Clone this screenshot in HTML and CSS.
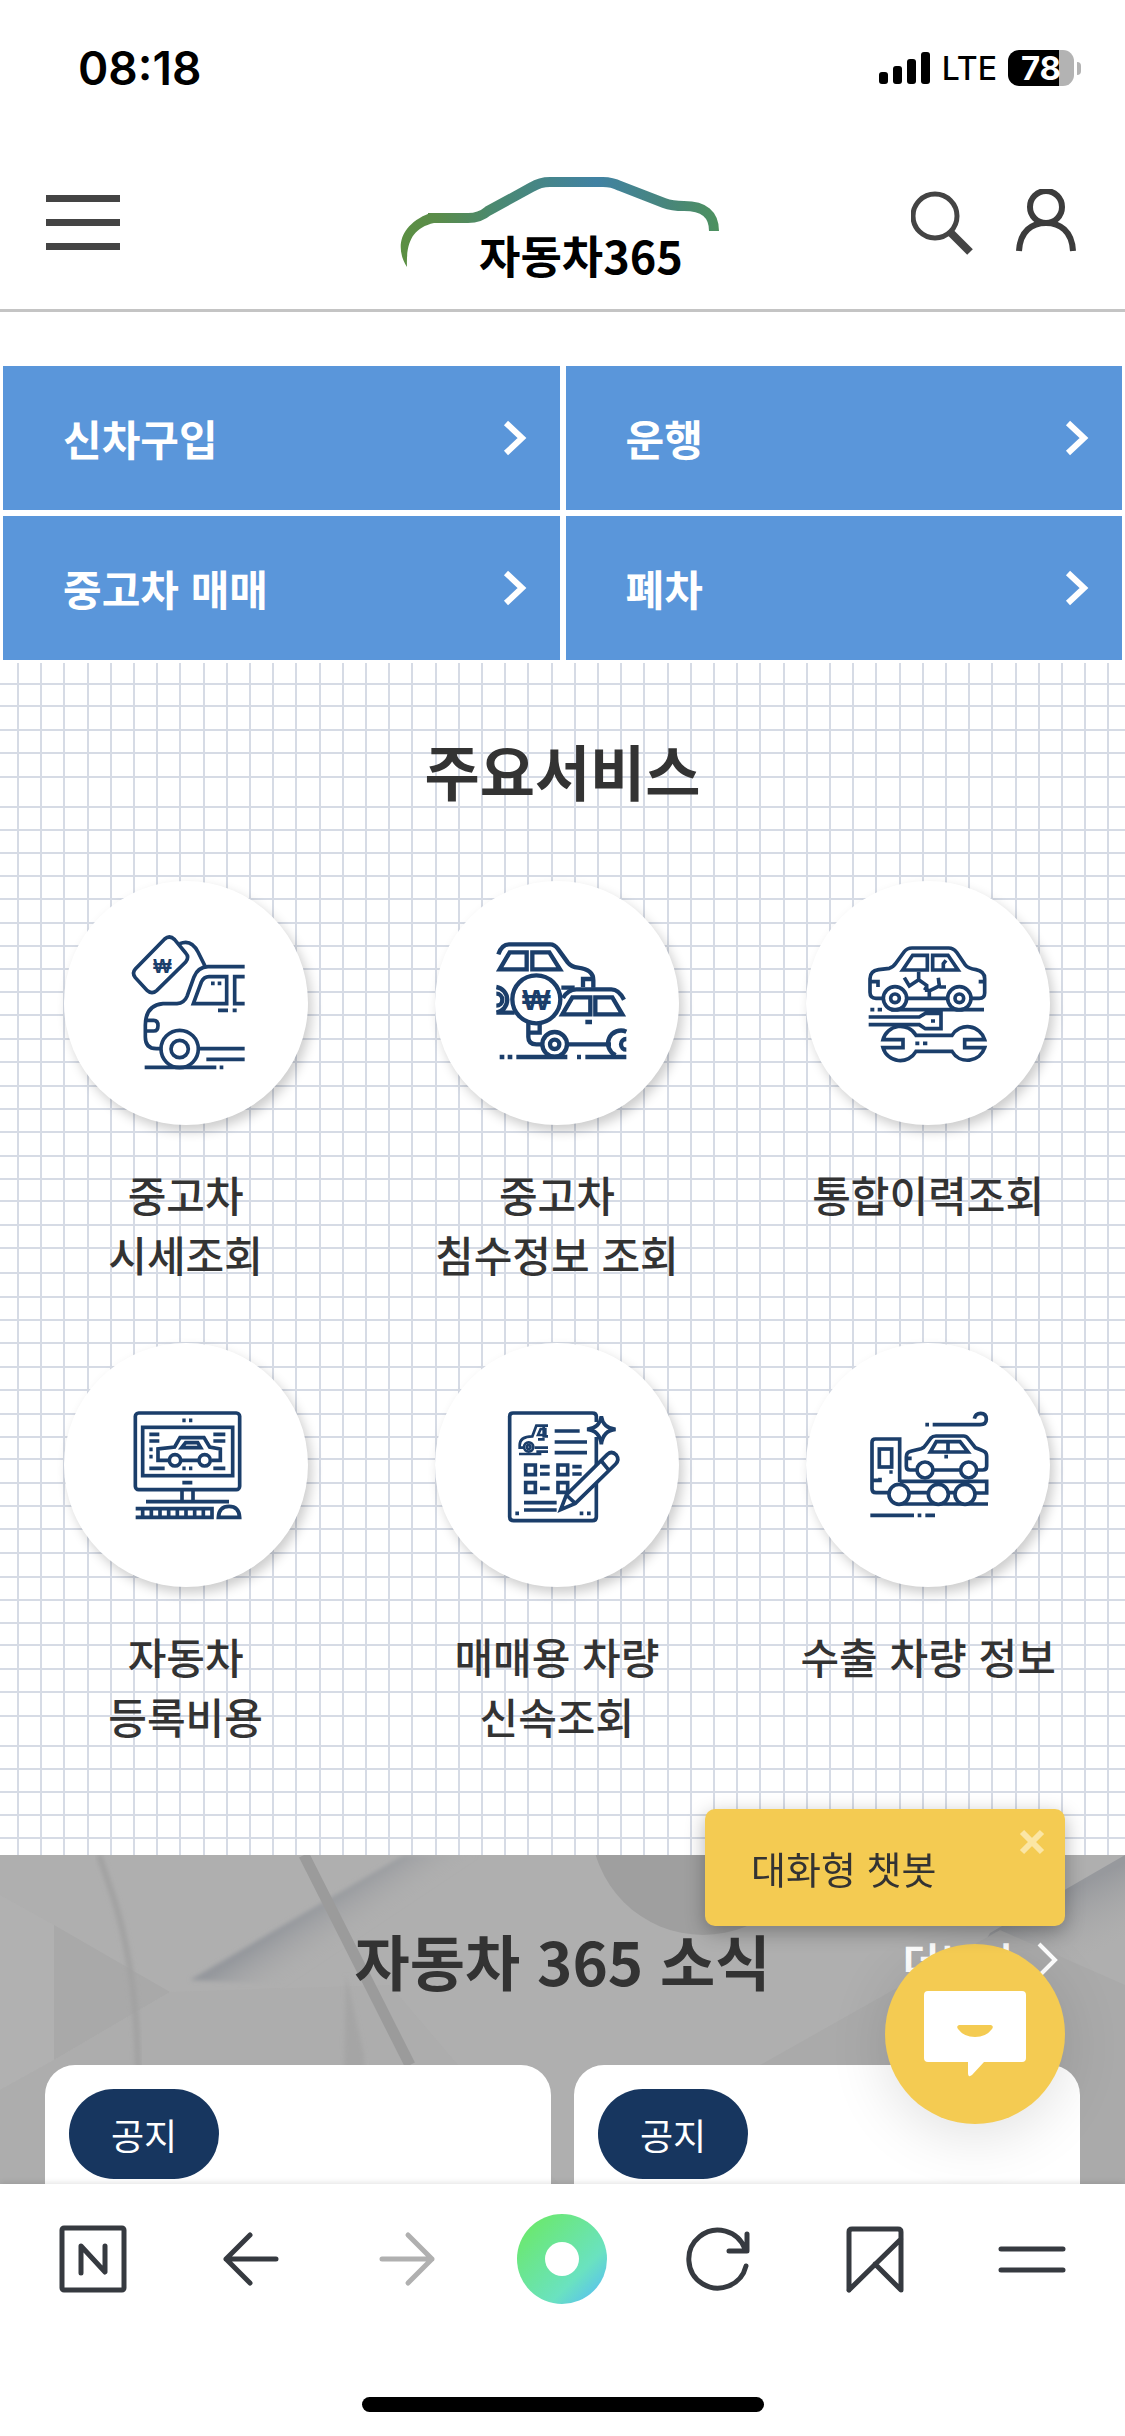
FILE: index.html
```html
<!DOCTYPE html>
<html lang="ko">
<head>
    <meta charset="UTF-8">
    <meta name="viewport" content="width=device-width, initial-scale=1">
    <title>자동차365</title>
    <link rel="stylesheet" href="styles.css">
</head>
<body>
    <!-- Status bar -->
    <div class="status-bar">
        <span class="status-time">08:18</span>
        <div class="status-right">
            <svg class="status-signal" width="52" height="36" viewBox="0 0 52 36">
                <rect x="0" y="22" width="9" height="12" rx="3"/>
                <rect x="14" y="16" width="9" height="18" rx="3"/>
                <rect x="28" y="9" width="9" height="25" rx="3"/>
                <rect x="42" y="2" width="9" height="32" rx="3"/>
            </svg>
            <span class="status-network">LTE</span>
            <div class="battery"><span class="battery-level">78</span></div>
        </div>
    </div>

    <!-- Header -->
    <header class="header">
        <button class="icon-button" aria-label="메뉴">
            <svg width="74" height="56" viewBox="0 0 74 56" fill="#444"><path d="M0 0h74v7H0zM0 24h74v7H0zM0 48h74v7H0z"/></svg>
        </button>
        <a class="logo" href="#">
            <svg width="326" height="132" viewBox="399 157 326 132">
                <defs>
                    <linearGradient id="logo-line" gradientUnits="userSpaceOnUse" x1="399" y1="0" x2="718" y2="0">
                        <stop offset="0" stop-color="#5b8f42"/>
                        <stop offset="0.12" stop-color="#5a8c4a"/>
                        <stop offset="0.3" stop-color="#4a8970"/>
                        <stop offset="0.62" stop-color="#4182a3"/>
                        <stop offset="0.85" stop-color="#488679"/>
                        <stop offset="1" stop-color="#4d915f"/>
                    </linearGradient>
                </defs>
                <path d="M407 267C396 250 397 226 430 213L434 223C412 228 406 243 407 267Z" fill="url(#logo-line)"/>
                <path d="M428 218H468Q480 218 488 211L532 187Q540 182 550 182H603Q612 182 620 186L664 203Q672 206 684 206Q714 206 714 231" fill="none" stroke="url(#logo-line)" stroke-width="10"/>
                <text class="logo-text" x="479" y="274">자동차365</text>
            </svg>
        </a>
        <div class="header-actions">
            <button class="icon-button" aria-label="검색">
                <svg width="62" height="64" viewBox="0 0 62 64" fill="none" stroke="#444" stroke-width="5"><circle cx="24" cy="25" r="22"/><path d="M40 42l19 19" stroke-width="8"/></svg>
            </button>
            <button class="icon-button" aria-label="마이페이지">
                <svg width="62" height="68" viewBox="0 0 62 68" fill="none" stroke="#3c3c3c" stroke-width="6"><circle cx="31" cy="18" r="16"/><path d="M4 62C5 42 17 34 31 34S57 42 58 62"/></svg>
            </button>
        </div>
    </header>

    <main class="main">
        <!-- Quick menu -->
        <nav class="quick-menu">
            <a class="quick-link" href="#">신차구입 <svg width="24" height="36" viewBox="0 0 24 36"><path d="M3 3l16 15L3 33"/></svg></a>
            <a class="quick-link" href="#">운행 <svg width="24" height="36" viewBox="0 0 24 36"><path d="M3 3l16 15L3 33"/></svg></a>
            <a class="quick-link" href="#">중고차 매매 <svg width="24" height="36" viewBox="0 0 24 36"><path d="M3 3l16 15L3 33"/></svg></a>
            <a class="quick-link" href="#">폐차 <svg width="24" height="36" viewBox="0 0 24 36"><path d="M3 3l16 15L3 33"/></svg></a>
        </nav>

        <!-- Main services -->
        <section class="services">
            <h2 class="section-title">주요서비스</h2>
            <div class="service-list">
                <a class="service" href="#">
                    <svg class="service-icon" viewBox="43 32 732 732">
                        <path d="M345 206L257 296Q246 308 257 322L293 361Q307 373 321 361L408 275Q420 261 408 248L375 208Q360 193 345 206Z"/>
                        <path d="M390 220Q425 205 445 245L466 287"/>
                        <path d="M585 289H475Q445 290 433 320L412 378Q404 398 382 400H340Q287 405 287 465V500Q287 535 320 535H333"/>
                        <path d="M287 450H312Q325 450 325 466Q325 482 312 482H287"/>
                        <path d="M585 319H555V400H585M531 319V400H431L455 335Q463 319 478 319Z"/>
                        <circle cx="390" cy="536" r="56"/>
                        <circle cx="390" cy="536" r="26"/>
                        <path d="M448 535H585M470 567H585M285 591H500M510 591h11M484 339h11M504 339h11M505 420h30M549 420h12"/>
                        <text x="338" y="308" font-size="58">₩</text>
                    </svg>
                    <span class="service-name">중고차<br>시세조회</span>
                </a>
                <a class="service" href="#">
                    <svg class="service-icon bold" viewBox="46 32 732 732">
                        <path d="M236 252Q246 222 268 222H392Q405 222 415 236L444 276Q455 290 475 292Q521 297 521 330V352M490 350V326H521"/>
                        <path d="M240 297L270 246H321V297ZM338 246H389L421 297H338Z"/>
                        <path d="M230 350A39 39 0 0 1 230 427M230 370A18 18 0 0 1 230 406M230 427H285M425 352H465"/>
                        <path d="M430 383Q445 357 470 357H575Q597 357 613 388"/>
                        <path d="M428 432L458 381H512V432ZM527 381H578L608 432H527Z"/>
                        <path d="M326 455V500Q326 522 350 522H368M360 455V487H330M446 522H574"/>
                        <circle cx="350" cy="387" r="72" fill="#fff"/>
                        <circle cx="405" cy="522" r="37"/>
                        <circle cx="405" cy="522" r="14"/>
                        <path d="M620 484A38 38 0 0 0 588 555M620 506A16 16 0 0 0 620 538"/>
                        <path d="M240 560h14M264 560h14M290 560h153M472 560h12M497 560h123M497 455h20"/>
                        <text x="350" y="420" font-size="90">₩</text>
                    </svg>
                    <span class="service-name">중고차<br>침수정보 조회</span>
                </a>
                <a class="service" href="#">
                    <svg class="service-icon" viewBox="50 32 732 732">
                        <path d="M283 384H260Q242 384 242 366V325Q242 302 268 298L300 294Q312 290 320 278L344 245Q353 233 368 233H478Q492 233 502 246L528 284Q535 294 560 298Q586 303 586 325V368Q586 384 570 384H548M355 384H472"/>
                        <path d="M340 299L370 255H414V299ZM430 255H476L506 299H430Z"/>
                        <path d="M388 304V328L360 347L345 322M388 328L412 345V365M404 352L420 362L450 347L447 322M450 350H470M420 362V388M462 299V280L470 270M245 334H266V350M568 334H584"/>
                        <circle cx="317" cy="384" r="35"/>
                        <circle cx="317" cy="384" r="13"/>
                        <circle cx="510" cy="384" r="35"/>
                        <circle cx="510" cy="384" r="13"/>
                        <path d="M243 418h12M265 418h13M305 418H584M238 440H390L408 429H455V475H408L390 463H238M425 452h12"/>
                        <path d="M281 508A54 54 0 0 1 380 495H488A54 54 0 0 1 586 508H526V532H586A54 54 0 0 1 488 543H380A54 54 0 0 1 281 532H341V508ZM378 519h12M401 519h13"/>
                    </svg>
                    <span class="service-name">통합이력조회</span>
                </a>
                <a class="service" href="#">
                    <svg class="service-icon" viewBox="43 38 732 732">
                        <rect x="257" y="248" width="313" height="230" rx="10"/>
                        <rect x="279" y="291" width="270" height="145"/>
                        <path d="M397 482V510M430 482V510M289 514H538M258 535H487V561H258M279 535V561M305 535V561M331 535V561M357 535V561M383 535V561M409 535V561M435 535V561M461 535V561"/>
                        <path d="M506 561Q508 528 538 528T570 561Z"/>
                        <path d="M398 270h10M418 270h10M398 457h30M299 312h30M299 332h30M491 312h36M491 332h36M299 357h10M299 379h10M299 414h46M398 414h10M418 414h10M491 414h36"/>
                        <path d="M357 390H325V356L375 350L391 322H463L480 350L512 356V390H486M397 390H446M396 352L408 337H444L453 352Z"/>
                        <circle cx="376" cy="390" r="17"/>
                        <circle cx="465" cy="390" r="17"/>
                    </svg>
                    <span class="service-name">자동차<br>등록비용</span>
                </a>
                <a class="service" href="#">
                    <svg class="service-icon" viewBox="46 38 732 732">
                        <path d="M530 275V258Q530 248 518 248H280Q270 248 270 258V560Q270 571 282 571H518Q530 571 530 560V455M530 320V405"/>
                        <path d="M545 258Q550 294 588 297Q550 300 545 342Q540 300 502 297Q540 294 545 258Z"/>
                        <path d="M405 302h75M405 335h97M405 367h97M361 409h29M361 431h29M458 409h28M458 431h28M361 474h29M313 517h98M313 539h98M287 549h11M480 549h11M502 549h11"/>
                        <path d="M318 404h29v29h-29zM415 404h29v29h-29zM318 457h29v29h-29zM415 457h29v29h-29z"/>
                        <path d="M423 538L440 494L563 372Q577 360 590 374Q600 388 588 401L467 519Z" fill="#fff"/>
                        <path d="M440 494L467 519M545 392L566 418"/>
                        <path d="M385 286H350L338 318Q300 318 300 345V352H310M345 352H385M385 364H350M298 371H365M355 327h20M355 314l8-18h14v18zM372 290V318H385" stroke-width="8"/>
                        <circle cx="327" cy="350" r="14" stroke-width="8"/>
                        <circle cx="327" cy="350" r="4"/>
                    </svg>
                    <span class="service-name">매매용 차량<br>신속조회</span>
                </a>
                <a class="service" href="#">
                    <svg class="service-icon" viewBox="50 38 732 732">
                        <path d="M297 487H260Q248 487 248 476V336Q248 326 258 326H331V455M360 487H416M331 453H592V488H558M478 487H497M252 450H272V442M300 425h10"/>
                        <rect x="270" y="356" width="37" height="54"/>
                        <path d="M329 521H596M243 555h131M385 555h11M408 555h29M408 283h11M430 283H572Q591 283 591 267Q591 249 574 249Q558 249 555 265"/>
                        <path d="M381 419H362Q351 419 351 408V380Q351 366 364 363L395 355Q405 352 410 343L425 323Q430 317 440 317H523Q531 317 536 324L558 352Q580 360 586 364Q592 368 592 378V408Q592 419 580 419H565M434 419H512"/>
                        <path d="M423 365L441 334H512L536 365ZM476 334V366M465 379h11M355 384h12"/>
                        <g fill="#fff">
                            <circle cx="407" cy="419" r="24"/>
                            <circle cx="538" cy="419" r="24"/>
                            <circle cx="329" cy="492" r="30"/>
                            <circle cx="447" cy="492" r="30"/>
                            <circle cx="527" cy="492" r="30"/>
                        </g>
                    </svg>
                    <span class="service-name">수출 차량 정보</span>
                </a>
            </div>
        </section>

        <!-- News -->
        <section class="news">
            <svg class="news-background" viewBox="0 0 1125 330" preserveAspectRatio="xMidYMin slice">
                <defs>
                    <linearGradient id="fold" gradientUnits="userSpaceOnUse" x1="290" y1="66" x2="318" y2="108">
                        <stop offset="0" stop-color="#94979c"/>
                        <stop offset="1" stop-color="#aeaeae" stop-opacity="0"/>
                    </linearGradient>
                    <linearGradient id="fold-right" gradientUnits="userSpaceOnUse" x1="1060" y1="40" x2="1090" y2="100">
                        <stop offset="0" stop-color="#97999d"/>
                        <stop offset="1" stop-color="#aaa" stop-opacity="0"/>
                    </linearGradient>
                    <filter id="soft"><feGaussianBlur stdDeviation="2"/></filter>
                </defs>
                <path d="M0 40L54 70V205L0 235Z" fill="#b1b1b1"/>
                <path d="M54 70L170 137L54 205Z" fill="#a9a9a9"/>
                <path d="M170 137L54 205L0 235V330H560L390 130Z" fill="#adadad"/>
                <path d="M190 125L404 0H480L290 130Z" fill="url(#fold)" filter="url(#soft)"/>
                <path d="M1125 0L990 78L960 130L1125 130Z" fill="url(#fold-right)"/>
                <path d="M760 210L1000 75L1125 130V330H620Z" fill="#aaa"/>
                <path d="M346 120L342 330H368L364 200Z" fill="#a5a5a5" filter="url(#soft)"/>
                <circle cx="703" cy="-32" r="112" fill="#9f9f9f"/>
                <path d="M99 0L112 38Q136 110 138 210V330" fill="none" stroke="#a2a2a2" stroke-width="6" filter="url(#soft)"/>
                <path d="M304 0L410 210" fill="none" stroke="#9b9b9b" stroke-width="11"/>
            </svg>
            <div class="news-head">
                <h2 class="section-title">자동차 365 소식</h2>
                <a class="more-link" href="#">더보기 <svg width="22" height="36" viewBox="0 0 22 36"><path d="M2 2l16 16L2 34"/></svg></a>
            </div>
            <div class="news-list">
                <article class="news-card"><span class="badge">공지</span></article>
                <article class="news-card"><span class="badge">공지</span></article>
            </div>
        </section>
    </main>

    <!-- Chatbot -->
    <div class="chatbot">
        <div class="chatbot-bubble">
            대화형 챗봇
            <button class="chatbot-close" aria-label="닫기">
                <svg width="26" height="26" viewBox="0 0 26 26"><path d="M3 3l20 20M23 3L3 23"/></svg>
            </button>
        </div>
        <button class="chatbot-button" aria-label="챗봇 열기">
            <svg width="102" height="86" viewBox="0 0 102 86">
                <path d="M4 0H98Q102 0 102 4V67Q102 71 98 71H60L48 84Q44 87 44 82V71H4Q0 71 0 67V4Q0 0 4 0Z" fill="#fff"/>
                <path d="M35 34H67Q70 35 68 38Q62 46 51 46T34 38Q32 35 35 34Z" fill="#f4cb52"/>
            </svg>
        </button>
    </div>

    <!-- Browser toolbar -->
    <footer class="toolbar">
        <div class="toolbar-buttons">
            <button class="icon-button" aria-label="네이버 홈"><svg class="toolbar-icon" viewBox="0 0 72 72"><rect x="5" y="5" width="62" height="62" rx="2"/><path d="M24 50V23L48 49V23"/></svg></button>
            <button class="icon-button" aria-label="뒤로"><svg class="toolbar-icon" viewBox="0 0 72 72"><path d="M62 36H12M36 12L12 36L36 60"/></svg></button>
            <button class="icon-button" aria-label="앞으로" disabled><svg class="toolbar-icon" viewBox="0 0 72 72"><path d="M12 36H62M38 12L62 36L38 60"/></svg></button>
            <button class="icon-button" aria-label="그린닷"><span class="green-dot"></span></button>
            <button class="icon-button" aria-label="새로고침"><svg class="toolbar-icon" viewBox="0 0 72 72"><path d="M63 43A29 29 0 1 1 62 26M64 11V28H46"/></svg></button>
            <button class="icon-button" aria-label="북마크"><svg class="toolbar-icon" viewBox="0 0 72 72"><path d="M10 67V9Q10 6 13 6H59Q62 6 62 9V67L36 41M10 67L62 16"/></svg></button>
            <button class="icon-button" aria-label="더보기 메뉴"><svg class="toolbar-icon" viewBox="0 0 72 72"><path d="M5 26H67M5 47H67"/></svg></button>
        </div>
        <div class="home-indicator"></div>
    </footer>
</body>
</html>
```

FILE: styles.css
```css
* {
    box-sizing: border-box;
}
body {
    margin: 0;
    min-height: 100vh;
    display: flex;
    flex-direction: column;
    background-color: #fff;
    color: #333;
    font-family: "Noto Sans CJK KR", "Noto Sans", sans-serif;
}
a {
    color: inherit;
    text-decoration: none;
}
button {
    font: inherit;
    cursor: pointer;
}
svg {
    display: block;
}
.icon-button {
    display: flex;
    padding: 0;
    border: none;
    background: none;
}

/* Status bar */
.status-bar {
    display: flex;
    justify-content: space-between;
    align-items: center;
    height: 136px;
    padding: 0 43px 0 78px;
    color: #000;
    font-family: Inter, sans-serif;
}
.status-time {
    font-size: 46px;
    font-weight: 600;
}
.status-right {
    display: flex;
    align-items: center;
    gap: 11px;
}
.status-network {
    font-size: 32px;
    font-weight: 500;
}
.battery {
    position: relative;
    width: 66px;
    height: 36px;
    margin-right: 8px;
    border-radius: 11px;
    background: linear-gradient(to right, #000 51px, #b3b3b3 51px);
    color: #fff;
    font-size: 33px;
    font-weight: 700;
    line-height: 36px;
    text-align: center;
}
.battery::after {
    content: "";
    position: absolute;
    top: 12px;
    right: -7px;
    width: 4px;
    height: 13px;
    border-radius: 0 4px 4px 0;
    background-color: #b3b3b3;
}

/* Header */
.header {
    display: grid;
    grid-template-columns: 1fr auto 1fr;
    align-items: center;
    height: 176px;
    padding: 0 48px 0 46px;
    border-bottom: 3px solid #c4c4c4;
}
.logo-text {
    font-size: 45px;
    font-weight: 700;
}
.header-actions {
    display: flex;
    justify-content: flex-end;
    align-items: center;
    gap: 42px;
}

.main {
    flex: 1;
    display: flex;
    flex-direction: column;
}

/* Quick menu */
.quick-menu {
    display: grid;
    grid-template-columns: 1fr 1fr;
    gap: 6px;
    margin-top: 51px;
    padding: 3px;
}
.quick-link {
    display: flex;
    justify-content: space-between;
    align-items: center;
    height: 144px;
    padding: 0 33px 0 60px;
    background-color: #5a96da;
    color: #fff;
    font-size: 42px;
    font-weight: 700;
    line-height: 60px;
}
.quick-link svg {
    fill: none;
    stroke: #fff;
    stroke-width: 6;
}

/* Services */
.services {
    padding: 62px 0 109px;
    background-image: url("data:image/svg+xml,%3Csvg xmlns='http://www.w3.org/2000/svg' width='116' height='939'%3E%3Cpath d='M0 15H116M0 38H116M0 61H116M0 84H116M0 107H116M0 131H116M0 154H116M0 177H116M0 200H116M0 223H116M0 247H116M0 270H116M0 294H116M0 317H116M0 340H116M0 364H116M0 387H116M0 409H116M0 433H116M0 456H116M0 481H116M0 505H116M0 528H116M0 551H116M0 575H116M0 598H116M0 622H116M0 645H116M0 667H116M0 691H116M0 714H116M0 737H116M0 761H116M0 785H116M0 808H116M0 831H116M0 853H116M0 877H116M0 900H116M0 924H116M1 0V939M24 0V939M47 0V939M71 0V939M94 0V939' stroke='%238091ae' stroke-opacity='.32' stroke-width='2'/%3E%3C/svg%3E");
    background-position: 17px 129px;
}
.section-title {
    margin: 0;
    font-size: 60px;
    font-weight: 700;
    line-height: 90px;
    text-align: center;
}
.service-list {
    display: grid;
    grid-template-columns: repeat(3, 33%);
    row-gap: 59px;
    margin-top: 66px;
}
.service {
    display: flex;
    flex-direction: column;
    align-items: center;
    gap: 39px;
}
.service-icon {
    width: 244px;
    height: 244px;
    border-radius: 50%;
    background-color: #fff;
    box-shadow: 4px 6px 12px rgba(0, 0, 0, 0.2);
    fill: none;
    stroke: #1b3e6a;
    stroke-width: 11;
}
.service-icon.bold {
    stroke-width: 13;
}
.service-icon text {
    fill: #1b3e6a;
    stroke: none;
    font-family: "Liberation Sans", sans-serif;
    font-weight: 700;
    text-anchor: middle;
}
.service-name {
    font-size: 42px;
    font-weight: 500;
    line-height: 60px;
    text-align: center;
}

/* News */
.news {
    position: relative;
    flex: 1;
    display: flex;
    flex-direction: column;
    overflow: hidden;
    background-color: #afafaf;
}
.news-background {
    position: absolute;
    top: 0;
    left: 0;
    width: 100%;
    height: 100%;
}
.news-head {
    position: relative;
    display: grid;
    grid-template-columns: 1fr auto 1fr;
    align-items: center;
    height: 210px;
    padding: 0 66px;
}
.news-head .section-title {
    grid-column: 2;
}
.more-link {
    display: flex;
    justify-content: flex-end;
    align-items: center;
    gap: 24px;
    color: #fff;
    font-size: 40px;
    font-weight: 700;
}
.more-link svg {
    fill: none;
    stroke: #fff;
    stroke-width: 4;
}
.news-list {
    position: relative;
    flex: 1;
    display: grid;
    grid-template-columns: 1fr 1fr;
    gap: 23px;
    padding: 0 45px;
}
.news-card {
    padding: 24px;
    padding-bottom: 5px;
    border-radius: 30px 30px 0 0;
    background-color: #fff;
}
.badge {
    display: block;
    width: 150px;
    border-radius: 45px;
    background-color: #17365f;
    color: #fff;
    font-size: 36px;
    line-height: 90px;
    text-align: center;
}

/* Chatbot */
.chatbot {
    position: fixed;
    right: 60px;
    bottom: 312px;
    z-index: 2;
    display: flex;
    flex-direction: column;
    align-items: flex-end;
    gap: 18px;
}
.chatbot-bubble {
    position: relative;
    width: 360px;
    padding: 0 46px;
    border-radius: 10px;
    background-color: #f4cb52;
    box-shadow: 0 6px 20px rgba(0, 0, 0, 0.3);
    font-size: 38px;
    line-height: 117px;
}
.chatbot-close {
    position: absolute;
    top: 20px;
    right: 20px;
    padding: 0;
    border: none;
    background: none;
}
.chatbot-close svg {
    stroke: #fbe6a5;
    stroke-width: 6;
}
.chatbot-button {
    display: flex;
    justify-content: center;
    align-items: center;
    width: 180px;
    height: 180px;
    padding: 0;
    border: none;
    border-radius: 50%;
    background-color: #f4cb52;
    box-shadow: 0 12px 60px rgba(0, 0, 0, 0.12);
}

/* Browser toolbar */
.toolbar {
    position: sticky;
    bottom: 0;
    z-index: 1;
    padding-bottom: 24px;
    background-color: #fff;
    box-shadow: 0 -1px 6px rgba(0, 0, 0, 0.12);
}
.toolbar-buttons {
    display: grid;
    grid-template-columns: repeat(7, 1fr);
    place-items: center;
    height: 150px;
    padding: 0 15px;
}
.toolbar-icon {
    width: 72px;
    height: 72px;
    fill: none;
    stroke: #363a40;
    stroke-width: 5;
    stroke-linecap: round;
    stroke-linejoin: round;
}
.icon-button:disabled .toolbar-icon {
    stroke: #b0b0b0;
}
.green-dot {
    width: 90px;
    height: 90px;
    border: 28px solid transparent;
    border-radius: 50%;
    background: linear-gradient(#fff, #fff) padding-box, linear-gradient(135deg, #6be873 15%, #6ae2c0 68%, #5ac4ec 90%) border-box;
}
.home-indicator {
    width: 402px;
    height: 15px;
    margin: 63px auto 0;
    border-radius: 8px;
    background-color: #000;
}
```
